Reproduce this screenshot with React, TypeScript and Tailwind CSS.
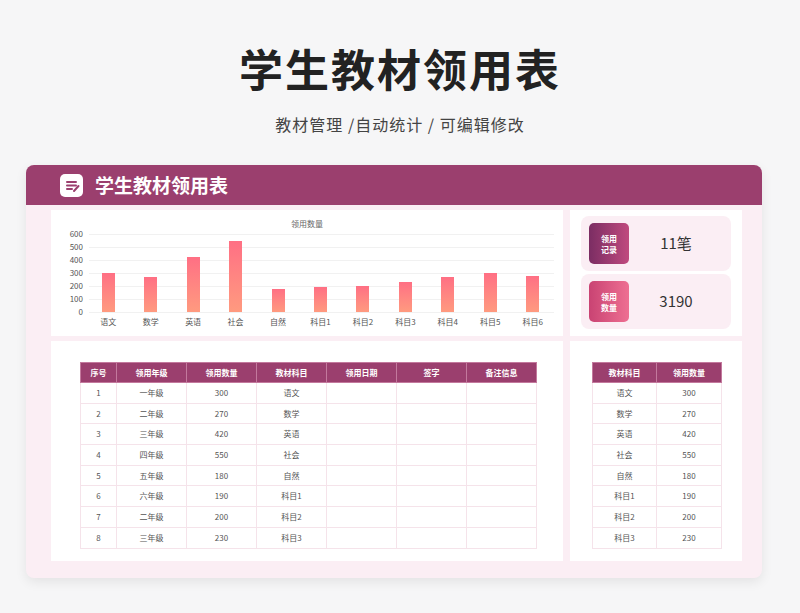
import React from "react";

const data = [
  ["1", "一年级", 300, "语文"],
  ["2", "二年级", 270, "数学"],
  ["3", "三年级", 420, "英语"],
  ["4", "四年级", 550, "社会"],
  ["5", "五年级", 180, "自然"],
  ["6", "六年级", 190, "科目1"],
  ["7", "二年级", 200, "科目2"],
  ["8", "三年级", 230, "科目3"],
] as const;
const chart: [string, number][] = [
  ["语文", 300], ["数学", 270], ["英语", 420], ["社会", 550], ["自然", 180], ["科目1", 190],
  ["科目2", 200], ["科目3", 230], ["科目4", 270], ["科目5", 300], ["科目6", 280],
];

export default function App() {
  const font = { fontFamily: '"Noto Sans CJK SC", "Noto Sans", sans-serif' };
  return (
    <div style={font} className="w-[800px] h-[613px] bg-[#f6f6f7] flex flex-col items-center overflow-hidden">
      <h1 className="mt-[38px] text-[44px] leading-[60px] font-bold text-[#222] tracking-[2px]">学生教材领用表</h1>
      <p className="mt-[14px] text-[16px] leading-[24px] text-[#444] tracking-[1px]">教材管理 /自动统计 /  可编辑修改</p>
      <div className="mt-[29px] self-start ml-[26px] w-[736px] h-[413px] rounded-[8px] bg-[#fbeef4] overflow-hidden shadow-[0_4px_12px_rgba(0,0,0,0.08)] flex flex-col">
        <div className="h-[40px] bg-[#9b3f6e] flex items-center px-[34px] gap-[12px] shrink-0">
          <div className="w-[23px] h-[23px] bg-white rounded-[5px] flex items-center justify-center">
            <svg width="16" height="15" viewBox="0 0 16 15">
              <path d="M3 4h9M3 7.5h9M3 11h5" stroke="#9b3f6e" strokeWidth="2" strokeLinecap="round" />
              <path d="M10 13l4.5-5" stroke="#9b3f6e" strokeWidth="2" strokeLinecap="round" />
            </svg>
          </div>
          <span className="text-white text-[19px] font-bold">学生教材领用表</span>
        </div>
        <div className="flex-1 flex gap-[7px] pl-[25px] pr-[20px] pt-[5px]">
          <div className="w-[512px] flex flex-col gap-[5px]">
            <div className="h-[126px] bg-white relative">
              <div className="text-center text-[8px] text-[#666] mt-[8px]">领用数量</div>
              <div className="absolute left-[12px] top-[24px] right-[9px] h-[108px]">
                {[600, 500, 400, 300, 200, 100, 0].map((v, i) => (
                  <div key={v} className="absolute left-0 right-0 flex items-center" style={{ top: i * 13 - 6 }}>
                    <span className="w-[20px] text-right text-[8px] leading-[12px] text-[#555]">{v}</span>
                    <div className="ml-[6px] flex-1 h-px bg-[#f1f1f1]" />
                  </div>
                ))}
                <div className="absolute left-[24px] right-0 top-0 h-[78px] flex">
                  {chart.map(([n, v]) => (
                    <div key={n} className="flex-1 relative flex justify-center">
                      <div className="absolute bottom-0 w-[13px] bg-gradient-to-b from-[#ff6f84] to-[#ff9a7f]" style={{ height: (v / 100) * 13 }} />
                      <span className="absolute top-[82px] text-[8px] text-[#555] whitespace-nowrap">{n}</span>
                    </div>
                  ))}
                </div>
              </div>
            </div>
            <div className="h-[220px] bg-white pt-[21px] pl-[29px]">
              <table className="border-collapse text-[8px] text-[#555]">
                <thead>
                  <tr className="bg-[#9b3f6e] text-white font-bold h-[20px]">
                    {["序号", "领用年级", "领用数量", "教材科目", "领用日期", "签字", "备注信息"].map((h, i) => (
                      <th key={h} className={`${i === 0 ? "w-[36px]" : "w-[70px]"} border border-[#c3799d] font-bold`}>{h}</th>
                    ))}
                  </tr>
                </thead>
                <tbody>
                  {data.map((r) => (
                    <tr key={r[0]} className="h-[20.7px]">
                      {[r[0], r[1], r[2], r[3], "", "", ""].map((c, i) => (
                        <td key={i} className="border border-[#f5e3ea] text-center">{c}</td>
                      ))}
                    </tr>
                  ))}
                </tbody>
              </table>
            </div>
          </div>
          <div className="w-[172px] flex flex-col gap-[5px]">
            <div className="h-[126px] bg-white px-[11px] pt-[6px] flex flex-col gap-[3px]">
              {[["领用", "记录", "11笔", "from-[#7b2d63] to-[#c04a7e]"], ["领用", "数量", "3190", "from-[#c94373] to-[#ee6f92]"]].map(([a, b, v, g]) => (
                <div key={v} className="h-[55px] rounded-[8px] bg-[#fbeef4] flex items-center px-[8px]">
                  <div className={`w-[40px] h-[41px] rounded-[5px] bg-gradient-to-r ${g} text-white text-[8px] leading-[11px] font-bold flex flex-col items-center justify-center`}>
                    <span>{a}</span><span>{b}</span>
                  </div>
                  <span className="flex-1 text-center text-[15px] text-[#333]">{v}</span>
                </div>
              ))}
            </div>
            <div className="h-[220px] bg-white pt-[21px] pl-[22px]">
              <table className="border-collapse text-[8px] text-[#555]">
                <thead>
                  <tr className="bg-[#9b3f6e] text-white h-[20px]">
                    <th className="w-[64px] border border-[#c3799d] font-bold">教材科目</th>
                    <th className="w-[65px] border border-[#c3799d] font-bold">领用数量</th>
                  </tr>
                </thead>
                <tbody>
                  {data.map((r) => (
                    <tr key={r[0]} className="h-[20.7px]">
                      <td className="border border-[#f5e3ea] text-center">{r[3]}</td>
                      <td className="border border-[#f5e3ea] text-center">{r[2]}</td>
                    </tr>
                  ))}
                </tbody>
              </table>
            </div>
          </div>
        </div>
      </div>
    </div>
  );
}
